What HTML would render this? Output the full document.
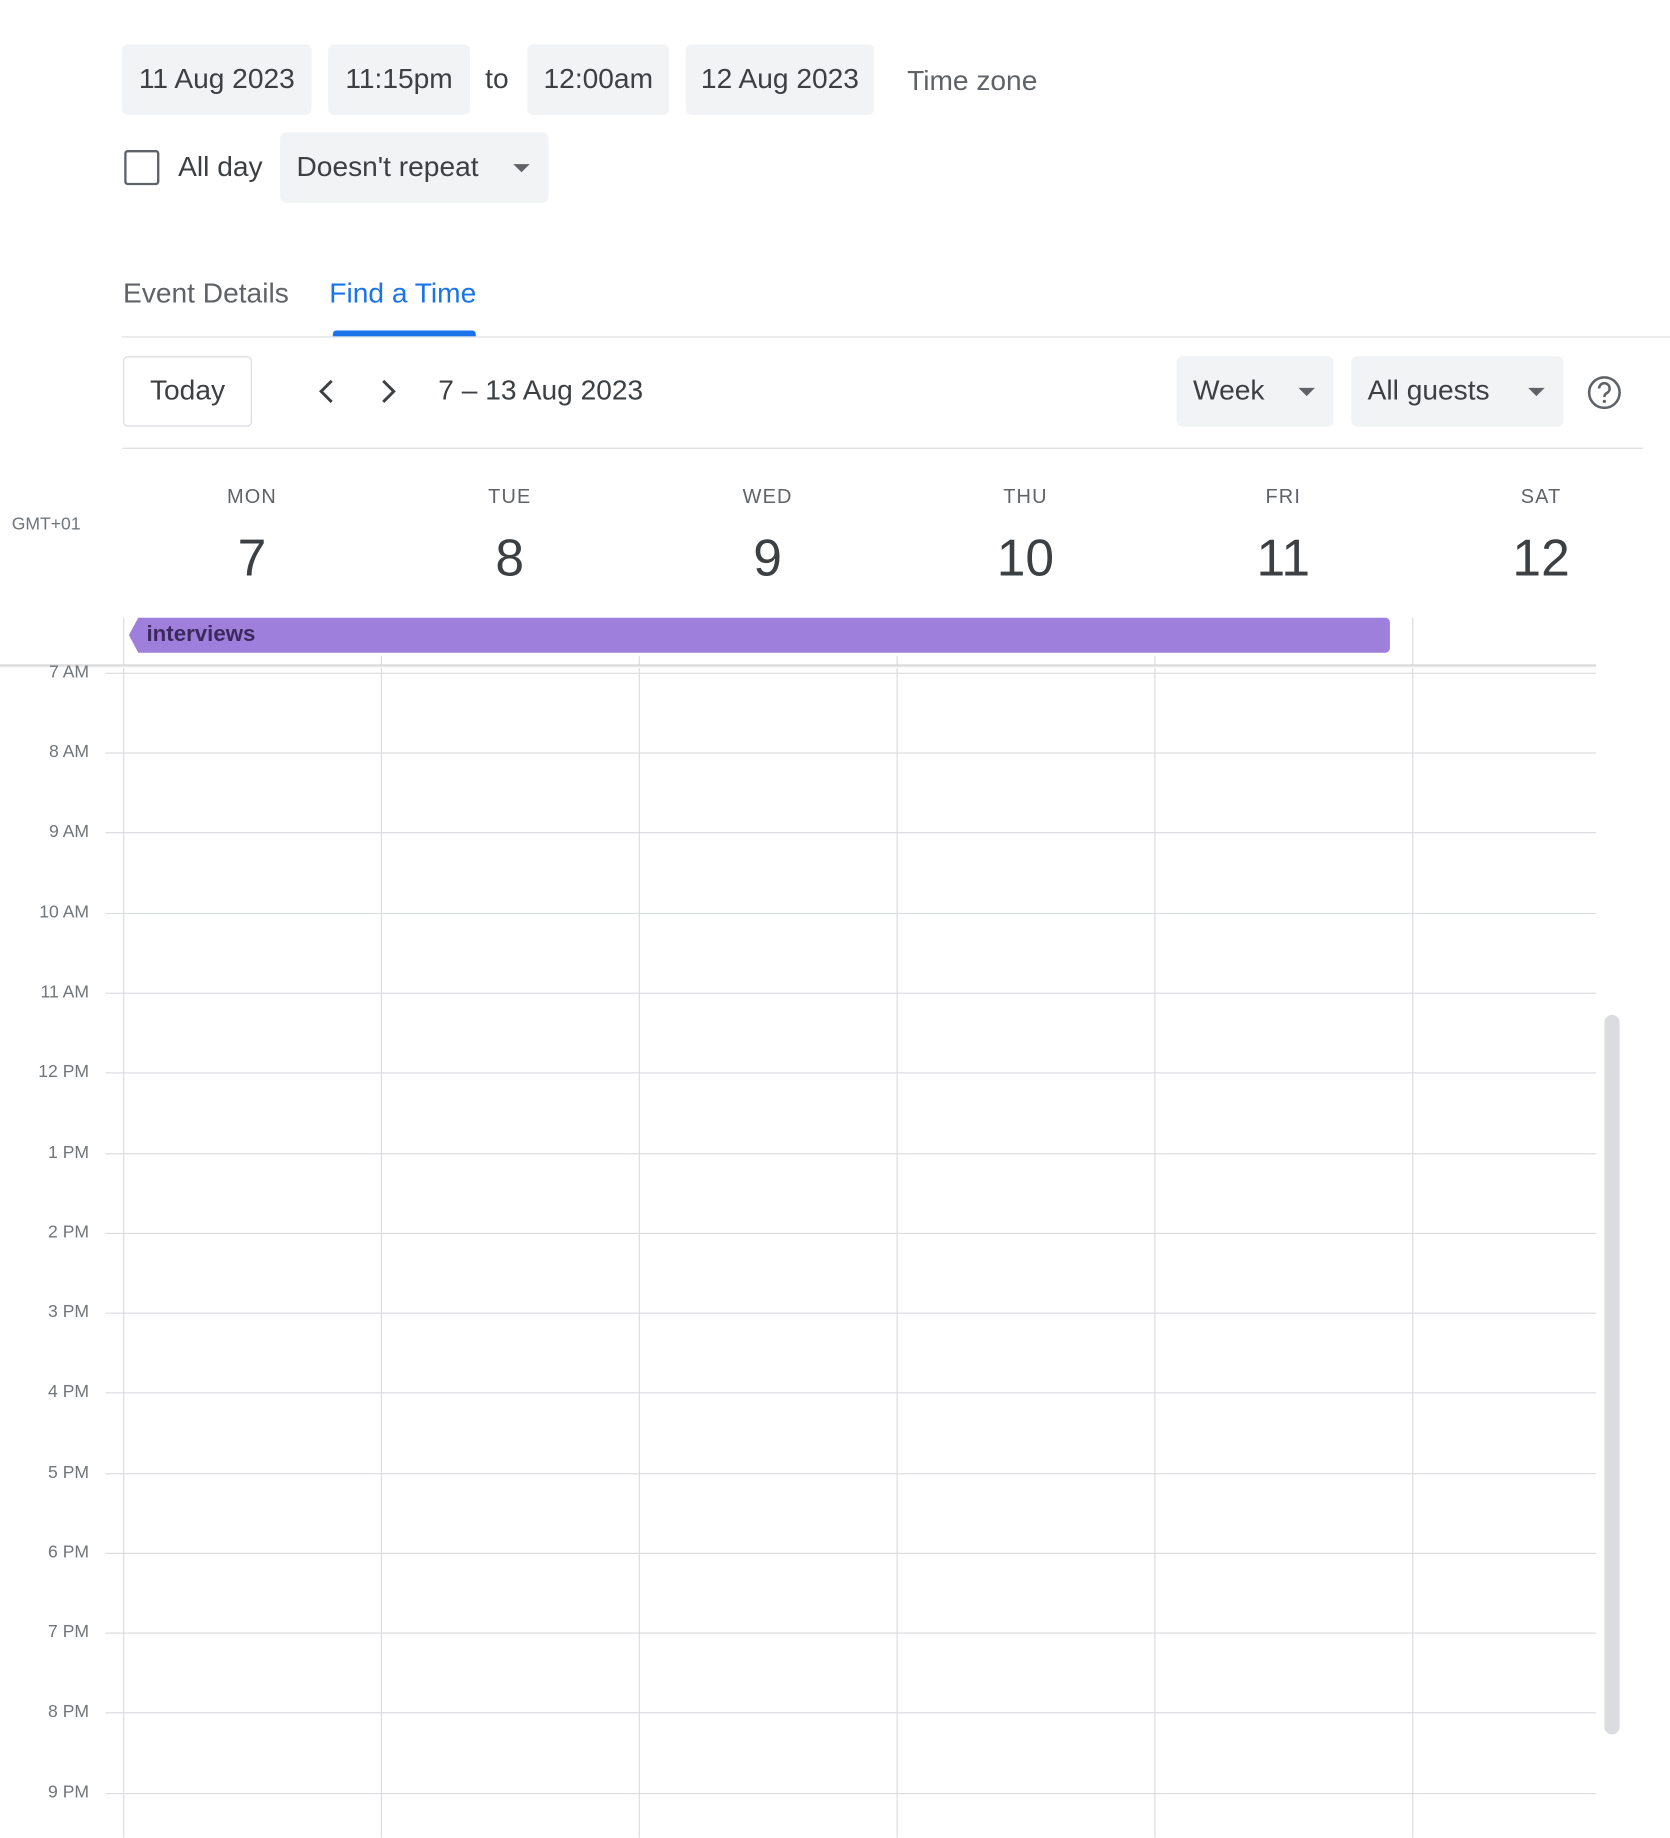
<!DOCTYPE html>
<html><head><meta charset="utf-8"><style>
html,body{margin:0;padding:0;background:#fff;overflow:hidden;width:1670px;height:1838px}
#w{position:absolute;left:0;top:0;width:1425px;height:1568px;overflow:hidden;transform:scale(1.17193);transform-origin:0 0;font-family:"Liberation Sans",Arial,sans-serif;color:#3c4043}
.a{position:absolute}
.chip{position:absolute;top:38px;height:60px;background:#f1f3f4;border-radius:5px;font-size:24px;line-height:60px;text-align:center;color:#3c4043}
.hl{position:absolute;left:90px;width:1272px;height:1px;background:#dadce0}
.vl{position:absolute;top:527px;height:1042px;width:1px;background:#dadce0}
.lbl{position:absolute;left:0;width:76px;text-align:right;font-size:15px;color:#70757a}
.dn{position:absolute;top:414px;width:220px;text-align:center;font-size:17px;letter-spacing:1px;color:#5f6368}
.dd{position:absolute;top:452px;width:220px;text-align:center;font-size:44px;color:#3c4043}
.tri{position:absolute;width:0;height:0;border-left:7px solid transparent;border-right:7px solid transparent;border-top:7px solid #5f6368}
</style></head><body><div id="w">
<div class="chip" style="left:104px;width:162px">11 Aug 2023</div>
<div class="chip" style="left:280px;width:121px">11:15pm</div>
<div class="a" style="left:414px;top:38px;line-height:60px;font-size:24px">to</div>
<div class="chip" style="left:450px;width:121px">12:00am</div>
<div class="chip" style="left:585px;width:161px">12 Aug 2023</div>
<div class="a" style="left:774px;top:40px;line-height:60px;font-size:24px;color:#5f6368">Time zone</div>
<div class="a" style="left:106px;top:128px;width:26px;height:26px;border:2px solid #5f6368;border-radius:3px"></div>
<div class="a" style="left:152px;top:113px;line-height:60px;font-size:24px">All day</div>
<div class="chip" style="left:239px;top:113px;width:229px;text-align:left;padding-left:14px;box-sizing:border-box">Doesn't repeat</div>
<div class="tri" style="left:438px;top:140px"></div>
<div class="a" style="left:105px;top:237px;font-size:24px;color:#5f6368">Event Details</div>
<div class="a" style="left:281px;top:237px;font-size:24px;color:#1a73e8">Find a Time</div>
<div class="a" style="left:284px;top:282px;width:122px;height:5px;background:#1a73e8;border-radius:3px 3px 0 0"></div>
<div class="a" style="left:104px;top:287px;width:1321px;height:1px;background:#dadce0"></div>
<div class="a" style="left:105px;top:304px;width:108px;height:58px;border:1px solid #dadce0;border-radius:4px;font-size:24px;line-height:58px;text-align:center">Today</div>
<svg class="a" style="left:264px;top:321px" width="80" height="26"><path d="M19 4l-9 9 9 9" fill="none" stroke="#3c4043" stroke-width="2.5"/><path d="M63 4l9 9-9 9" fill="none" stroke="#3c4043" stroke-width="2.5"/></svg>
<div class="a" style="left:374px;top:320px;font-size:24px">7 – 13 Aug 2023</div>
<div class="chip" style="left:1004px;top:304px;width:134px;text-align:left;padding-left:14px;box-sizing:border-box">Week</div>
<div class="tri" style="left:1108px;top:331px"></div>
<div class="chip" style="left:1153px;top:304px;width:181px;text-align:left;padding-left:14px;box-sizing:border-box">All guests</div>
<div class="tri" style="left:1304px;top:331px"></div>
<svg class="a" style="left:1353px;top:319px" width="32" height="32"><circle cx="16" cy="16" r="13" fill="none" stroke="#5f6368" stroke-width="2.2"/><path d="M11.5 12.5a4.5 4.5 0 1 1 6.5 4c-1.5.8-2 1.6-2 3.2" fill="none" stroke="#5f6368" stroke-width="2.2"/><circle cx="16" cy="23.5" r="1.4" fill="#5f6368"/></svg>
<div class="a" style="left:104px;top:382px;width:1298px;height:1px;background:#dadce0"></div>
<div class="a" style="left:10px;top:439px;font-size:15px;color:#70757a">GMT+01</div>
<div class="dn" style="left:105px">MON</div><div class="dd" style="left:105px">7</div>
<div class="dn" style="left:325px">TUE</div><div class="dd" style="left:325px">8</div>
<div class="dn" style="left:545px">WED</div><div class="dd" style="left:545px">9</div>
<div class="dn" style="left:765px">THU</div><div class="dd" style="left:765px">10</div>
<div class="dn" style="left:985px">FRI</div><div class="dd" style="left:985px">11</div>
<div class="dn" style="left:1205px">SAT</div><div class="dd" style="left:1205px">12</div>
<div class="vl" style="left:105px"></div><div class="vl" style="left:325px;top:560px;height:1008px"></div><div class="vl" style="left:545px;top:560px;height:1008px"></div><div class="vl" style="left:765px;top:560px;height:1008px"></div><div class="vl" style="left:985px;top:560px;height:1008px"></div><div class="vl" style="left:1205px"></div>
<svg class="a" style="left:108px;top:527px" width="1080" height="31"><path d="M10 0H1074a4 4 0 0 1 4 4V26a4 4 0 0 1-4 4H10L2 15z" fill="#9e7fdb"/></svg>
<div class="a" style="left:125px;top:531px;font-size:19px;font-weight:bold;color:#3c2a5e">interviews</div>
<div class="a" style="left:0;top:567px;width:1362px;height:3px;background:linear-gradient(#ccc,#fff)"></div>
<div class="hl" style="top:574px"></div><div class="lbl" style="top:565px">7 AM</div>
<div class="hl" style="top:642px"></div><div class="lbl" style="top:633px">8 AM</div>
<div class="hl" style="top:710px"></div><div class="lbl" style="top:701px">9 AM</div>
<div class="hl" style="top:779px"></div><div class="lbl" style="top:770px">10 AM</div>
<div class="hl" style="top:847px"></div><div class="lbl" style="top:838px">11 AM</div>
<div class="hl" style="top:915px"></div><div class="lbl" style="top:906px">12 PM</div>
<div class="hl" style="top:984px"></div><div class="lbl" style="top:975px">1 PM</div>
<div class="hl" style="top:1052px"></div><div class="lbl" style="top:1043px">2 PM</div>
<div class="hl" style="top:1120px"></div><div class="lbl" style="top:1111px">3 PM</div>
<div class="hl" style="top:1188px"></div><div class="lbl" style="top:1179px">4 PM</div>
<div class="hl" style="top:1257px"></div><div class="lbl" style="top:1248px">5 PM</div>
<div class="hl" style="top:1325px"></div><div class="lbl" style="top:1316px">6 PM</div>
<div class="hl" style="top:1393px"></div><div class="lbl" style="top:1384px">7 PM</div>
<div class="hl" style="top:1461px"></div><div class="lbl" style="top:1452px">8 PM</div>
<div class="hl" style="top:1530px"></div><div class="lbl" style="top:1521px">9 PM</div>
<div class="a" style="left:1369px;top:866px;width:13px;height:614px;background:#dadce0;border-radius:7px"></div>
</div></body></html>
